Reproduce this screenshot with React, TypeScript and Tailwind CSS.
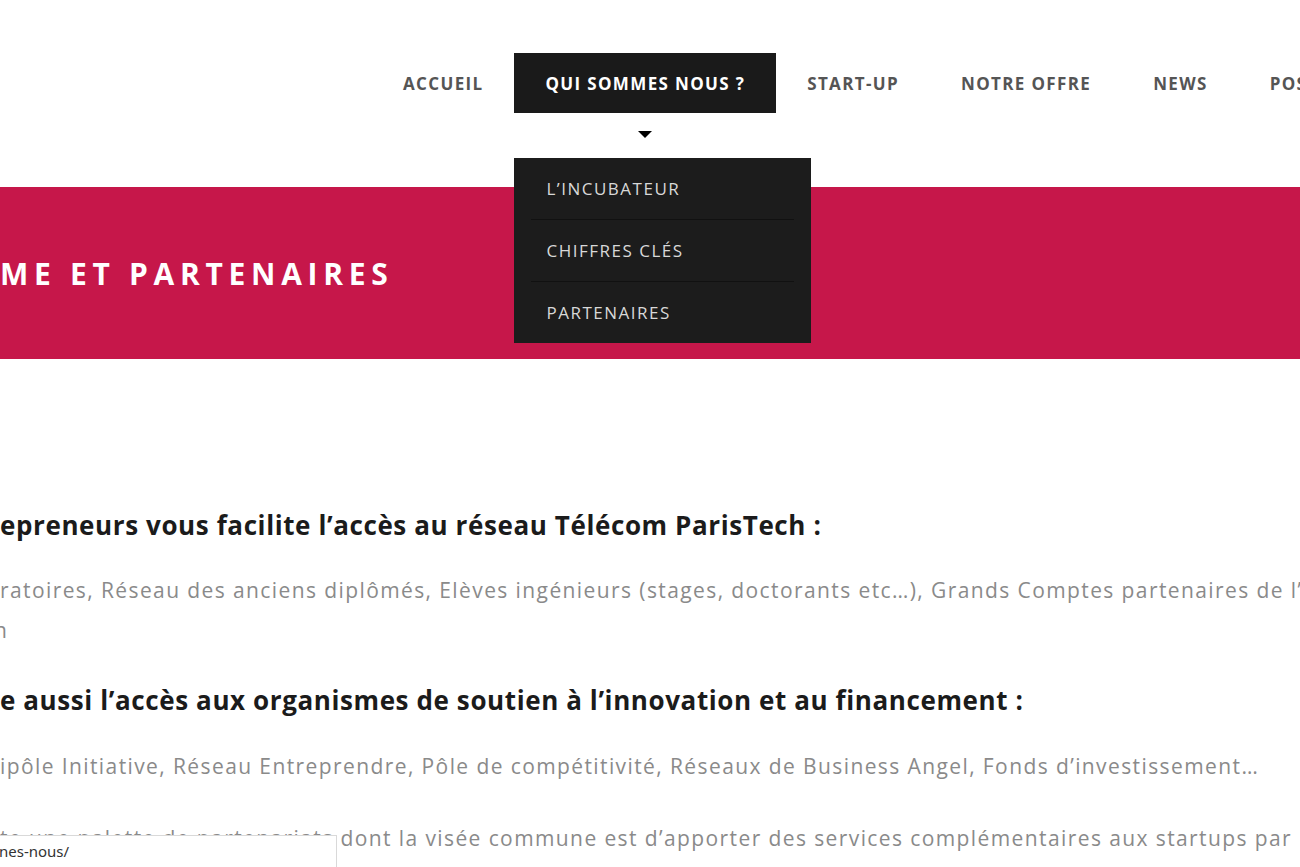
export default function App() {
  return (
    <div className="relative w-[1300px] h-[867px] overflow-hidden bg-white font-['Open_Sans',sans-serif]">
      <header className="relative h-[187px]">
        <ul className="flex pl-[372px] pt-[53px] whitespace-nowrap text-[17px] font-bold tracking-[1.35px]">
          <li className="h-[60px] px-[31px] pt-[2px] flex items-center text-[#555]">ACCUEIL</li>
          <li className="relative h-[60px] px-[31px] pt-[2px] flex items-center bg-[#1a1a1a] text-white">
            QUI SOMMES NOUS ?
            <span className="absolute top-[78px] left-1/2 -translate-x-1/2 w-0 h-0 border-l-[7px] border-r-[7px] border-t-[7px] border-l-transparent border-r-transparent border-t-black" />
            <div className="absolute top-[105px] left-0 z-10 w-[297px] bg-[#1c1c1c] px-[17px] font-normal tracking-[1.5px] text-[#d8d8d8]">
              <div className="h-[62px] flex items-center pl-[15px] border-b border-[#111]">L’INCUBATEUR</div>
              <div className="h-[62px] flex items-center pl-[15px] border-b border-[#111]">CHIFFRES CLÉS</div>
              <div className="h-[61px] flex items-center pl-[15px]">PARTENAIRES</div>
            </div>
          </li>
          <li className="h-[60px] px-[31px] pt-[2px] flex items-center text-[#555]">START-UP</li>
          <li className="h-[60px] px-[31px] pt-[2px] flex items-center text-[#555]">NOTRE OFFRE</li>
          <li className="h-[60px] px-[31px] pt-[2px] flex items-center text-[#555]">NEWS</li>
          <li className="h-[60px] px-[31px] pt-[2px] flex items-center text-[#555]">POSTULER</li>
        </ul>
      </header>

      <section className="h-[172px] bg-[#c6174a] flex items-center">
        <h1 className="whitespace-nowrap text-[30px] font-bold tracking-[0.19em] text-white">ME ET PARTENAIRES</h1>
      </section>

      <main className="whitespace-nowrap">
        <h2 className="mt-[150px] text-[26px] leading-[32px] font-bold tracking-[0.6px] text-[#1b1b1b]">
          epreneurs vous facilite l’accès au réseau Télécom ParisTech :
        </h2>
        <p className="mt-[29px] text-[21px] leading-[40px] tracking-[1.4px] text-[#8a8a8a]">
          ratoires, Réseau des anciens diplômés, Elèves ingénieurs (stages, doctorants etc…), Grands Comptes partenaires de l’Ecole
          <br />
          <span className="ml-[-6px]">n</span>
        </p>
        <h2 className="mt-[34px] text-[26px] leading-[32px] font-bold tracking-[0.6px] text-[#1b1b1b]">
          e aussi l’accès aux organismes de soutien à l’innovation et au financement :
        </h2>
        <p className="mt-[30px] text-[21px] leading-[40px] tracking-[1.4px] text-[#8a8a8a]">
          ipôle Initiative, Réseau Entreprendre, Pôle de compétitivité, Réseaux de Business Angel, Fonds d’investissement…
        </p>
        <p className="mt-[32px] text-[21px] leading-[40px] tracking-[1.4px] text-[#8a8a8a]">
          te une palette de partenariats dont la visée commune est d’apporter des services complémentaires aux startups par
        </p>
      </main>

      <div className="absolute bottom-0 left-0 w-[337px] h-[32px] bg-white border-t border-r border-[#d9d9d9] flex items-center font-['Noto_Sans',sans-serif] text-[15px] text-[#333]">
        <span className="ml-[-1px]">nes-nous/</span>
      </div>
    </div>
  );
}
